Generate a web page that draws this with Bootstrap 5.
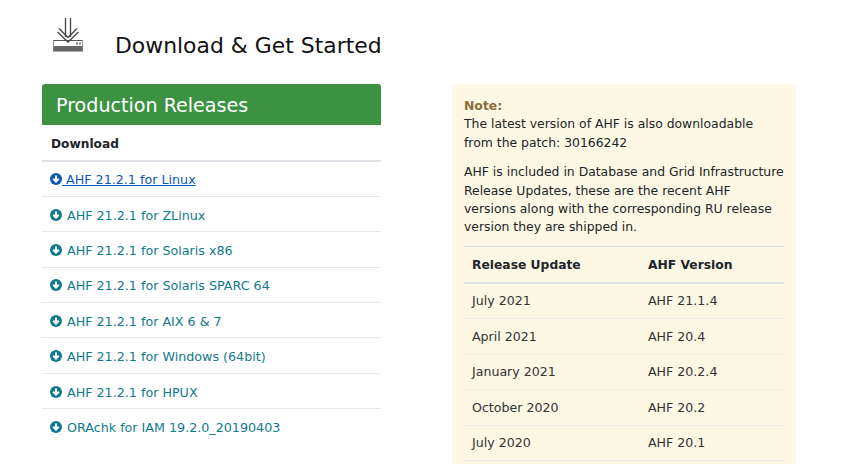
<!DOCTYPE html>
<html lang="en"><head><meta charset="utf-8">
<link href="https://cdn.jsdelivr.net/npm/bootstrap@5.3.0/dist/css/bootstrap.min.css" rel="stylesheet">
<style>
html,body{height:464px;overflow:hidden;background:#fff}
body{font-family:"DejaVu Sans",sans-serif;font-size:12.4px;line-height:18.4px;color:#212529}
.page-wrap{padding:0 69px 0 42px;gap:71px}
.left-col{width:339px;flex:none}
.right-col{flex:1;min-width:0;padding-top:84px}
.head-row{height:84px}
.dl-icon{margin:18px 0 0 11px;flex:none}
.page-title{font-size:21.9px;font-weight:400;line-height:28px;margin:32px 0 0 32px;color:#111;white-space:nowrap}
.green-head{background:#3c9240;color:#fff;font-size:19.1px;line-height:24px;height:41px;padding:10px 14px 7px;border-radius:3px 3px 0 0;margin:0}
.dl-list{font-size:12.7px}
.dl-list .th{font-weight:700;font-size:12.2px;padding:10px 9px 8px;height:36.5px;border-bottom:2px solid #dee2e6;color:#212529}
.dl-list .tr{height:35.4px;padding:9.7px 8px 7.3px;border-bottom:1px solid #e6e8ea}
.dl-list .tr:last-child{border-bottom:0}
.dl-list a{color:#0f7a8c;text-decoration:none}
.dl-list a.active-link{color:#0b57b5;text-decoration:underline}
.arrow-ico{width:12px;height:12px;vertical-align:-1px;margin-right:5px}
.active-link .arrow-ico{margin-right:0}
.note-box{background:#fcf8e3;border-radius:4px;padding:13px 12px 0;height:400px;color:#212529}
.note-label{color:#8a6d3b;font-weight:700}
.note-box p{margin:0 0 11px}
.note-box p+p{margin-bottom:9px}
.rel-table{width:100%;border-top:1px solid #dfe2e2;font-size:12.6px;line-height:18px;color:#333}
.rel-table th,.rel-table td{padding:8.25px 8px;font-weight:400;border-bottom:1px solid #eeeee8;background:none}
.rel-table th{font-weight:700;font-size:12.3px;color:#212529;border-bottom:2px solid #dde2e2;padding:9px 8px 8px}
.rel-table .c1{width:176px}
</style></head><body>
<div class="page-wrap d-flex">
<div class="left-col">
<div class="head-row d-flex">
<svg class="dl-icon" width="30" height="34" viewBox="0 0 30 34" aria-hidden="true"><path d="M.5 22.5h29a.4.4 0 0 1 .4.4V33H.1V22.9a.4.4 0 0 1 .4-.4z" fill="#fff" stroke="#555"/><rect x=".5" y="28" width="29" height="5" fill="#666"/><rect x="23" y="24.5" width="2" height="2" fill="#777"/><rect x="26" y="24.5" width="2" height="2" fill="#777"/><g fill="none" stroke="#444" stroke-width="1.3"><path d="M12.5 0v19M17.5 0v19"/><path d="M6 10.5l9 9 9-9M4.5 14l10.5 10L25.500 14" /></g></svg>
<h1 class="page-title">Download &amp; Get Started</h1>
</div>
<h2 class="green-head">Production Releases</h2>
<div class="dl-list">
<div class="th">Download</div>
<div class="tr"><a class="active-link" href="#"><svg class="arrow-ico" viewBox="0 0 12 12"><circle cx="6" cy="6" r="6" fill="currentColor"/><path d="M6 2.4v6.400M3.200 5.800L6 8.600l2.800-2.800" fill="none" stroke="#fff" stroke-width="2"/></svg> AHF 21.2.1 for Linux</a></div>
<div class="tr"><a href="#"><svg class="arrow-ico" viewBox="0 0 12 12"><circle cx="6" cy="6" r="6" fill="currentColor"/><path d="M6 2.4v6.400M3.200 5.800L6 8.600l2.800-2.800" fill="none" stroke="#fff" stroke-width="2"/></svg>AHF 21.2.1 for ZLinux</a></div>
<div class="tr"><a href="#"><svg class="arrow-ico" viewBox="0 0 12 12"><circle cx="6" cy="6" r="6" fill="currentColor"/><path d="M6 2.4v6.400M3.200 5.800L6 8.600l2.800-2.800" fill="none" stroke="#fff" stroke-width="2"/></svg>AHF 21.2.1 for Solaris x86</a></div>
<div class="tr"><a href="#"><svg class="arrow-ico" viewBox="0 0 12 12"><circle cx="6" cy="6" r="6" fill="currentColor"/><path d="M6 2.4v6.400M3.200 5.800L6 8.600l2.800-2.800" fill="none" stroke="#fff" stroke-width="2"/></svg>AHF 21.2.1 for Solaris SPARC 64</a></div>
<div class="tr"><a href="#"><svg class="arrow-ico" viewBox="0 0 12 12"><circle cx="6" cy="6" r="6" fill="currentColor"/><path d="M6 2.4v6.400M3.200 5.800L6 8.600l2.800-2.800" fill="none" stroke="#fff" stroke-width="2"/></svg>AHF 21.2.1 for AIX 6 &amp; 7</a></div>
<div class="tr"><a href="#"><svg class="arrow-ico" viewBox="0 0 12 12"><circle cx="6" cy="6" r="6" fill="currentColor"/><path d="M6 2.4v6.400M3.200 5.800L6 8.600l2.800-2.800" fill="none" stroke="#fff" stroke-width="2"/></svg>AHF 21.2.1 for Windows (64bit)</a></div>
<div class="tr"><a href="#"><svg class="arrow-ico" viewBox="0 0 12 12"><circle cx="6" cy="6" r="6" fill="currentColor"/><path d="M6 2.4v6.400M3.200 5.800L6 8.600l2.800-2.800" fill="none" stroke="#fff" stroke-width="2"/></svg>AHF 21.2.1 for HPUX</a></div>
<div class="tr"><a href="#"><svg class="arrow-ico" viewBox="0 0 12 12"><circle cx="6" cy="6" r="6" fill="currentColor"/><path d="M6 2.4v6.400M3.200 5.800L6 8.600l2.800-2.800" fill="none" stroke="#fff" stroke-width="2"/></svg>ORAchk for IAM 19.2.0_20190403</a></div>
</div>
</div>
<div class="right-col">
<div class="note-box">
<span class="note-label">Note:</span><br>
<p>The latest version of AHF is also downloadable from the patch: 30166242</p>
<p>AHF is included in Database and Grid Infrastructure Release Updates, these are the recent AHF versions along with the corresponding RU release version they are shipped in.</p>
<table class="rel-table">
<thead><tr><th class="c1">Release Update</th><th>AHF Version</th></tr></thead>
<tbody>
<tr><td>July 2021</td><td>AHF 21.1.4</td></tr>
<tr><td>April 2021</td><td>AHF 20.4</td></tr>
<tr><td>January 2021</td><td>AHF 20.2.4</td></tr>
<tr><td>October 2020</td><td>AHF 20.2</td></tr>
<tr><td>July 2020</td><td>AHF 20.1</td></tr>
</tbody></table>
</div>
</div>
</div>
<script src="https://cdn.jsdelivr.net/npm/bootstrap@5.3.0/dist/js/bootstrap.bundle.min.js"></script>
</body></html>
